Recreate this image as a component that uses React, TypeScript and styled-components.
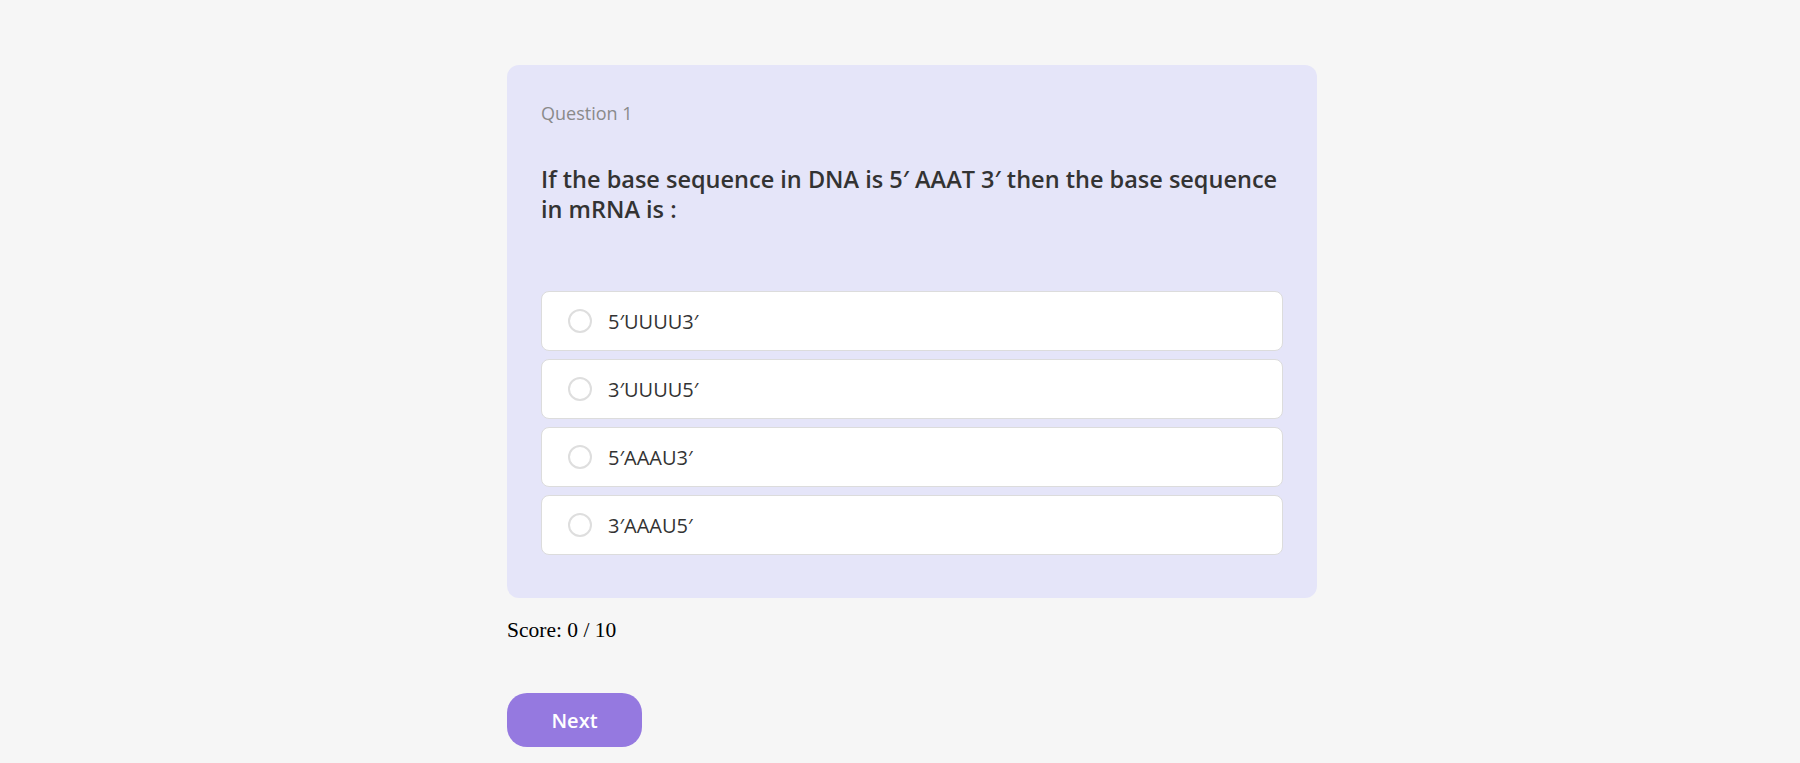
import React, { useState } from "react";
import styled, { createGlobalStyle } from "styled-components";

const Global = createGlobalStyle`
  html, body { margin: 0; padding: 0; background: #f6f6f6; }
  body { font-family: "Liberation Serif", serif; }
`;

const Page = styled.div`
  padding-top: 65px;
  margin-left: calc(50% - 393px);
  width: 810px;
`;

const Card = styled.div`
  background: #e5e5f9;
  border-radius: 12px;
  padding: 36px 34px 43px;
  box-sizing: border-box;
  font-family: "Open Sans", "Lato", sans-serif;
`;

const Label = styled.div`
  color: #8a8a8a;
  font-size: 18px;
  line-height: 24px;
  margin-bottom: 39px;
`;

const QuestionText = styled.div`
  color: #333;
  font-size: 23.5px;
  font-weight: 600;
  line-height: 30px;
  margin-bottom: 67px;
`;

const Options = styled.div`
  display: flex;
  flex-direction: column;
  gap: 8px;
`;

const Option = styled.label`
  display: flex;
  align-items: center;
  gap: 16px;
  height: 60px;
  box-sizing: border-box;
  padding: 0 26px;
  background: #fff;
  border: 1px solid #dcdcdc;
  border-radius: 8px;
  cursor: pointer;
  color: #333;
  font-size: 20px;
`;

const Radio = styled.span<{ $checked: boolean }>`
  width: 24px;
  height: 24px;
  box-sizing: border-box;
  border-radius: 50%;
  border: 2px solid ${(p) => (p.$checked ? "#9579e0" : "#dedede")};
  background: ${(p) => (p.$checked ? "#9579e0" : "#fff")};
  flex-shrink: 0;
`;

const Score = styled.p`
  margin: 19px 0 0;
  font-size: 21.5px;
  line-height: 26px;
  color: #000;
`;

const NextButton = styled.button`
  margin-top: 50px;
  width: 135px;
  height: 54px;
  border: none;
  border-radius: 20px;
  background: #9579e0;
  color: #fff;
  font-family: "Open Sans", "Lato", sans-serif;
  font-size: 20px;
  font-weight: 600;
  cursor: pointer;
`;

const options = ["5′UUUU3′", "3′UUUU5′", "5′AAAU3′", "3′AAAU5′"];

export default function App() {
  const [sel, setSel] = useState<number | null>(null);
  return (
    <>
      <Global />
      <Page>
        <Card>
          <Label>Question 1</Label>
          <QuestionText>
            If the base sequence in DNA is 5′ AAAT 3′ then the base sequence in mRNA is :
          </QuestionText>
          <Options>
            {options.map((o, i) => (
              <Option key={o} onClick={() => setSel(i)}>
                <Radio $checked={sel === i} />
                {o}
              </Option>
            ))}
          </Options>
        </Card>
        <Score>Score: 0 / 10</Score>
        <NextButton>Next</NextButton>
      </Page>
    </>
  );
}
